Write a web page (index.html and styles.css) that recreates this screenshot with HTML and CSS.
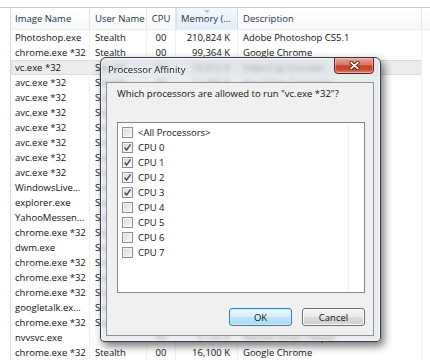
FILE: index.html
```html
<!DOCTYPE html>
<html>
<head>
  <title>Processor Affinity</title>
  <link rel="stylesheet" href="styles.css">
</head>
<body>
  <div class="procs">
    <div class="list">
      <div class="list-head">
        <div class="hcell">Image Name</div>
        <div class="hcell">User Name</div>
        <div class="hcell center">CPU</div>
        <div class="hcell sorted">Memory (...</div>
        <div class="hcell">Description</div>
        <div class="hcell filler"></div>
      </div>

      <div class="row"><div class="cell">Photoshop.exe</div><div class="cell">Stealth</div><div class="cell center">00</div><div class="cell num">210,824 K</div><div class="cell">Adobe Photoshop CS5.1</div></div>
      <div class="row"><div class="cell">chrome.exe *32</div><div class="cell">Stealth</div><div class="cell center">00</div><div class="cell num">99,364 K</div><div class="cell">Google Chrome</div></div>
      <div class="row selected"><div class="cell">vc.exe *32</div><div class="cell">Stealth</div><div class="cell center">00</div><div class="cell num">74,912 K</div><div class="cell">VideoCap Encoder</div></div>
      <div class="row"><div class="cell">avc.exe *32</div><div class="cell">Stealth</div><div class="cell center">00</div><div class="cell num">12,480 K</div><div class="cell">Any Video Converter</div></div>
      <div class="row"><div class="cell">avc.exe *32</div><div class="cell">Stealth</div><div class="cell center">00</div><div class="cell num">11,956 K</div><div class="cell">Any Video Converter</div></div>
      <div class="row"><div class="cell">avc.exe *32</div><div class="cell">Stealth</div><div class="cell center">00</div><div class="cell num">11,872 K</div><div class="cell">Any Video Converter</div></div>
      <div class="row"><div class="cell">avc.exe *32</div><div class="cell">Stealth</div><div class="cell center">00</div><div class="cell num">11,840 K</div><div class="cell">Any Video Converter</div></div>
      <div class="row"><div class="cell">avc.exe *32</div><div class="cell">Stealth</div><div class="cell center">00</div><div class="cell num">11,804 K</div><div class="cell">Any Video Converter</div></div>
      <div class="row"><div class="cell">avc.exe *32</div><div class="cell">Stealth</div><div class="cell center">00</div><div class="cell num">11,796 K</div><div class="cell">Any Video Converter</div></div>
      <div class="row"><div class="cell">avc.exe *32</div><div class="cell">Stealth</div><div class="cell center">00</div><div class="cell num">11,652 K</div><div class="cell">Any Video Converter</div></div>
      <div class="row"><div class="cell">WindowsLive...</div><div class="cell">Stealth</div><div class="cell center">00</div><div class="cell num">10,228 K</div><div class="cell">Windows Live</div></div>
      <div class="row"><div class="cell">explorer.exe</div><div class="cell">Stealth</div><div class="cell center">00</div><div class="cell num">9,744 K</div><div class="cell">Windows Explorer</div></div>
      <div class="row"><div class="cell">YahooMessen...</div><div class="cell">Stealth</div><div class="cell center">00</div><div class="cell num">9,120 K</div><div class="cell">Yahoo! Messenger</div></div>
      <div class="row"><div class="cell">chrome.exe *32</div><div class="cell">Stealth</div><div class="cell center">00</div><div class="cell num">8,860 K</div><div class="cell">Google Chrome</div></div>
      <div class="row"><div class="cell">dwm.exe</div><div class="cell">Stealth</div><div class="cell center">00</div><div class="cell num">8,432 K</div><div class="cell">Desktop Window</div></div>
      <div class="row"><div class="cell">chrome.exe *32</div><div class="cell">Stealth</div><div class="cell center">00</div><div class="cell num">7,988 K</div><div class="cell">Google Chrome</div></div>
      <div class="row"><div class="cell">chrome.exe *32</div><div class="cell">Stealth</div><div class="cell center">00</div><div class="cell num">7,540 K</div><div class="cell">Google Chrome</div></div>
      <div class="row"><div class="cell">chrome.exe *32</div><div class="cell">Stealth</div><div class="cell center">00</div><div class="cell num">7,212 K</div><div class="cell">Google Chrome</div></div>
      <div class="row"><div class="cell">googletalk.ex...</div><div class="cell">Stealth</div><div class="cell center">00</div><div class="cell num">6,904 K</div><div class="cell">Google Talk</div></div>
      <div class="row"><div class="cell">chrome.exe *32</div><div class="cell">Stealth</div><div class="cell center">00</div><div class="cell num">6,480 K</div><div class="cell">Google Chrome</div></div>
      <div class="row"><div class="cell">nvvsvc.exe</div><div class="cell"></div><div class="cell center">00</div><div class="cell num">5,120 K</div><div class="cell">NVIDIA Driver Helper</div></div>
      <div class="row"><div class="cell">chrome.exe *32</div><div class="cell">Stealth</div><div class="cell center">00</div><div class="cell num">16,100 K</div><div class="cell">Google Chrome</div></div>
    </div>
  </div>

  <div class="dialog">
    <div class="titlebar">
      <span class="title">Processor Affinity</span>
      <button class="close" aria-label="Close">
        <svg width="11" height="9" viewBox="0 0 11 9">
          <path d="M2.2 1.6L8.8 7.4M8.8 1.6L2.2 7.4" stroke="#4b1c14" stroke-width="3.4" stroke-linecap="round"/>
          <path d="M2.2 1.6L8.8 7.4M8.8 1.6L2.2 7.4" stroke="#fff" stroke-width="1.9" stroke-linecap="round"/>
        </svg>
      </button>
    </div>

    <div class="client">
      <div class="question">Which processors are allowed to run "vc.exe *32"?</div>

      <div class="listbox">
        <div class="items">
          <label class="item"><span class="box"></span>&lt;All Processors&gt;</label>
          <label class="item"><span class="box"><svg width="9" height="9" viewBox="0 0 9 9"><path d="M1.6 4.6L3.6 7L7.6 1.4" fill="none" stroke="#3f4f7a" stroke-width="1.5"/></svg></span>CPU 0</label>
          <label class="item"><span class="box"><svg width="9" height="9" viewBox="0 0 9 9"><path d="M1.6 4.6L3.6 7L7.6 1.4" fill="none" stroke="#3f4f7a" stroke-width="1.5"/></svg></span>CPU 1</label>
          <label class="item"><span class="box"><svg width="9" height="9" viewBox="0 0 9 9"><path d="M1.6 4.6L3.6 7L7.6 1.4" fill="none" stroke="#3f4f7a" stroke-width="1.5"/></svg></span>CPU 2</label>
          <label class="item"><span class="box"><svg width="9" height="9" viewBox="0 0 9 9"><path d="M1.6 4.6L3.6 7L7.6 1.4" fill="none" stroke="#3f4f7a" stroke-width="1.5"/></svg></span>CPU 3</label>
          <label class="item"><span class="box"></span>CPU 4</label>
          <label class="item"><span class="box"></span>CPU 5</label>
          <label class="item"><span class="box"></span>CPU 6</label>
          <label class="item"><span class="box"></span>CPU 7</label>
        </div>
      </div>

      <div class="actions">
        <button class="btn default">OK</button>
        <button class="btn">Cancel</button>
      </div>
    </div>
  </div>
</body>
</html>
```

FILE: styles.css
```css
body {
  margin: 0;
  position: relative;
  height: 363px;
  overflow: hidden;
  background: #fff;
  color: #111;
  font-family: "Open Sans", "Noto Sans", sans-serif;
  font-size: 9.5px;
}

/* process list */
.procs {
  margin-top: 7px;
  border-top: 1px solid #c9c9c9;
  padding-left: 10px;
}
.list {
  border-left: 1px solid #dadada;
}
.list-head {
  display: grid;
  grid-template-columns: 79px 57px 29px 62px 184px 1fr;
  height: 21px;
  border-bottom: 1px solid #ececec;
  background: linear-gradient(#ffffff, #f7f8f9);
}
.hcell {
  position: relative;
  box-sizing: border-box;
  padding-left: 4px;
  border-right: 1px solid #e2e5e9;
  line-height: 21px;
  color: #263447;
  white-space: nowrap;
}
.hcell:nth-child(n+2) {
  padding-left: 5px;
}
.hcell.center {
  padding: 0;
  text-align: center;
}
.hcell.sorted {
  background: linear-gradient(#f4f9fd, #e1eef9);
  border-right-color: #c6def1;
  box-shadow: inset 1px 0 #d3e6f5;
}
.hcell.sorted::before {
  content: "";
  position: absolute;
  top: 2px;
  left: 28px;
  border-left: 3px solid transparent;
  border-right: 3px solid transparent;
  border-top: 3px solid #9fc3e2;
}
.hcell.filler {
  border-right: none;
}

.row {
  display: grid;
  grid-template-columns: 79px 57px 29px 62px 184px;
  width: 411px;
  height: 15px;
  box-sizing: border-box;
}
.row.selected {
  background: #ececec;
  box-shadow: inset 0 0 0 1px #dadada;
  border-radius: 2px;
}
.cell {
  box-sizing: border-box;
  padding-left: 5px;
  border-right: 1px solid #f1f1f1;
  line-height: 15px;
  white-space: nowrap;
  overflow: hidden;
}
.cell:first-child {
  padding-left: 4px;
}
.cell.center {
  padding: 0;
  text-align: center;
}
.cell.num {
  padding: 0 7px 0 0;
  text-align: right;
}

/* affinity dialog */
.dialog {
  position: absolute;
  left: 100px;
  top: 57px;
  width: 281px;
  height: 285px;
  box-sizing: border-box;
  display: flex;
  flex-direction: column;
  padding: 0 6px 5px 5px;
  border: 1px solid #3a3e44;
  border-radius: 6px 6px 4px 4px;
  background: rgba(222, 227, 233, 0.68);
  backdrop-filter: blur(2px);
  box-shadow: inset 0 0 0 1px rgba(255, 255, 255, 0.6), 3px 4px 9px rgba(0, 0, 0, 0.55);
}
.titlebar {
  height: 24px;
  display: flex;
  justify-content: space-between;
  align-items: flex-start;
}
.title {
  padding: 4px 0 0 2px;
  line-height: 15px;
  color: #111;
  text-shadow: 0 0 5px #fff, 0 0 3px #fff;
}
.close {
  width: 40px;
  height: 17px;
  margin-top: -1px;
  padding: 0;
  display: flex;
  align-items: center;
  justify-content: center;
  border: 1px solid #5c2118;
  border-radius: 0 0 4px 4px;
  background: linear-gradient(#eaa797 0%, #d9765f 45%, #c2432b 52%, #c94c33 78%, #e2876f 100%);
  box-shadow: inset 0 0 0 1px rgba(255, 255, 255, 0.35);
}

.client {
  flex: 1;
  display: flex;
  flex-direction: column;
  padding: 4px 8px 9px 10px;
  border: 1px solid #8b949e;
  background: #f0f0f0;
}
.question {
  line-height: 14px;
  margin-bottom: 21px;
  white-space: nowrap;
}
.listbox {
  height: 171px;
  box-sizing: border-box;
  display: flex;
  border: 1px solid #828790;
  background: #fff;
}
.items {
  width: 230px;
  padding-top: 2px;
  border-right: 1px solid #f0f0f0;
}
.item {
  display: flex;
  align-items: center;
  gap: 5px;
  height: 15px;
  padding-left: 4px;
}
.box {
  width: 11px;
  height: 11px;
  box-sizing: border-box;
  display: flex;
  align-items: center;
  justify-content: center;
  border: 1px solid #8e8f8f;
  background: linear-gradient(135deg, #d6d6d6, #fbfbfb);
  box-shadow: inset 0 0 0 1px #f6f6f6;
}

.actions {
  margin-top: auto;
  display: flex;
  justify-content: flex-end;
  gap: 10px;
}
.btn {
  width: 63px;
  height: 18px;
  padding: 0;
  border: 1px solid #707070;
  border-radius: 3px;
  background: linear-gradient(#f3f3f3 0%, #ebebeb 48%, #dddddd 52%, #cfcfcf 100%);
  box-shadow: inset 0 0 0 1px #fcfcfc;
  color: #111;
  font: inherit;
}
.btn.default {
  border-color: #3c7fb1;
  background: linear-gradient(#eaf6fd 0%, #d9f0fc 48%, #bee6fd 52%, #a7d9f5 100%);
  box-shadow: inset 0 0 0 1px #c9ecfb;
}
```
